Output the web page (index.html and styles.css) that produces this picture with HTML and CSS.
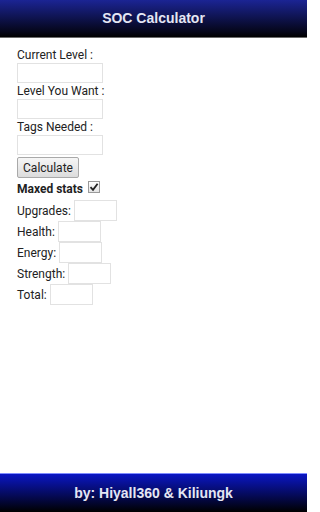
FILE: index.html
```html
<!DOCTYPE html>
<html>
<head>
<meta charset="utf-8">
<link rel="stylesheet" href="styles.css">
</head>
<body>
<div class="page">
  <header class="topbar">SOC Calculator</header>
  <main class="content">
    <div class="label">Current Level :</div>
    <input class="field" type="text">
    <div class="label">Level You Want :</div>
    <input class="field" type="text">
    <div class="label">Tags Needed :</div>
    <input class="field" type="text">
    <button class="btn">Calculate</button>
    <div class="maxed"><span>Maxed stats</span><span class="check"><svg width="10" height="10" viewBox="0 0 10 10"><path d="M1.5 5.2 L4 7.8 L8.6 1.8" fill="none" stroke="#222" stroke-width="1.8"/></svg></span></div>
    <div class="row"><span>Upgrades:</span><span class="small"></span></div>
    <div class="row"><span>Health:</span><span class="small"></span></div>
    <div class="row"><span>Energy:</span><span class="small"></span></div>
    <div class="row"><span>Strength:</span><span class="small"></span></div>
    <div class="row"><span>Total:</span><span class="small"></span></div>
  </main>
  <footer class="bottombar">by: Hiyall360 &amp; Kiliungk</footer>
</div>
</body>
</html>
```
FILE: styles.css
```css
html, body { margin: 0; padding: 0; background: #fff; }
.page {
  width: 307px; height: 512px;
  display: flex; flex-direction: column;
  font-family: Roboto, "Liberation Sans", sans-serif;
  color: #222;
}
.topbar {
  height: 36px;
  border-bottom: 1px solid #6a6a6a;
  background: linear-gradient(#1b2494, #05061a 85%, #000);
  color: #e4e6f4;
  font-family: "Liberation Sans", Arial, sans-serif;
  font-weight: bold;
  font-size: 14px;
  display: flex; align-items: center; justify-content: center;
  padding-bottom: 1px;
  flex: none;
}
.content {
  flex: 1;
  padding: 9px 17px 0;
  display: flex; flex-direction: column; align-items: flex-start;
  font-size: 12px;
}
.label { height: 16px; line-height: 16px; }
.field {
  box-sizing: border-box;
  width: 86px; height: 20px;
  margin: 0; padding: 0;
  border: 1px solid #e2e2e2;
  background: #fff;
}
.btn {
  box-sizing: border-box;
  margin-top: 2px;
  height: 21px; width: 62px;
  padding: 0;
  border: 1px solid #a9a9a9;
  border-radius: 2px;
  background: linear-gradient(#f6f6f6, #dcdcdc);
  font-family: Roboto, "Liberation Sans", sans-serif;
  font-size: 12px;
  color: #222;
}
.maxed {
  display: flex; align-items: center; gap: 5px;
  height: 21px;
  font-weight: bold;
  margin-bottom: 1px;
}
.check {
  box-sizing: border-box;
  width: 12px; height: 12px;
  border: 1px solid #9a9a9a;
  background: linear-gradient(#fff, #e4e4e4);
  display: flex; align-items: center; justify-content: center;
  margin-top: -3px;
}
.row {
  display: flex; align-items: center; gap: 3px;
  height: 21px;
}
.small {
  box-sizing: border-box;
  width: 43px; height: 21px;
  border: 1px solid #e2e2e2;
  background: #fff;
}
.bottombar {
  flex: none;
  height: 38px;
  border-top: 1px solid #7f8cff;
  background: linear-gradient(#0a16c4, #050a5a 55%, #000);
  color: #e4e6f4;
  font-family: "Liberation Sans", Arial, sans-serif;
  font-weight: bold;
  font-size: 14px;
  display: flex; align-items: center; justify-content: center;
}
```
